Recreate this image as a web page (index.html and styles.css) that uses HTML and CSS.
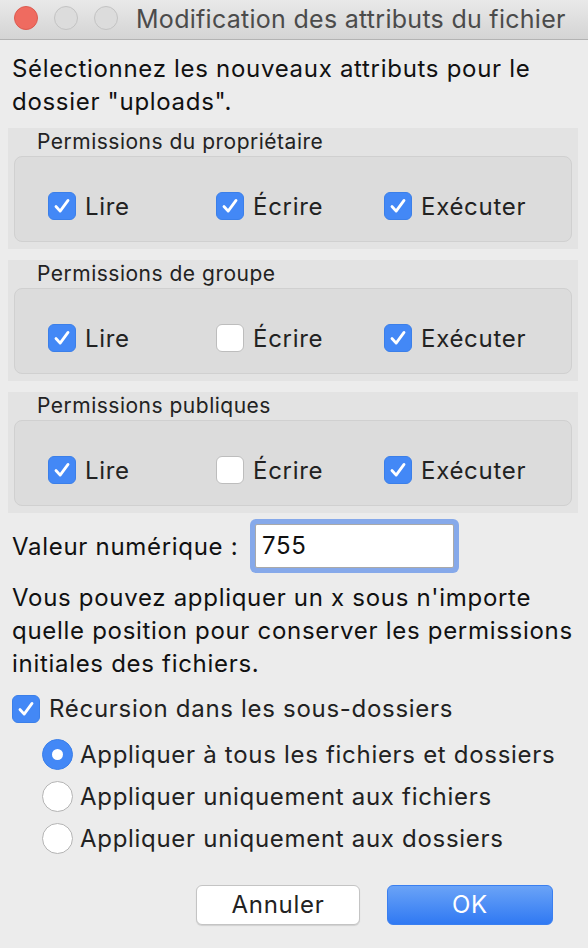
FILE: index.html
```html
<!DOCTYPE html>
<html lang="fr">
<head>
<meta charset="utf-8">
<title>Modification des attributs du fichier</title>
<link rel="stylesheet" href="styles.css">
</head>
<body>
<div class="window">
  <div class="titlebar">
    <div class="lights">
      <span class="light red"></span>
      <span class="light"></span>
      <span class="light"></span>
    </div>
    <span class="title">Modification des attributs du fichier</span>
  </div>
  <div class="content">
    <p class="intro">Sélectionnez les nouveaux attributs pour le<br>dossier "uploads".</p>

    <div class="groups">
      <section class="group">
        <div class="group-title">Permissions du propriétaire</div>
        <div class="group-box">
          <label class="check"><span class="box on"><svg viewBox="0 0 28 28"><path d="M7.5 14.5 L12 19.5 L20.5 8"/></svg></span><span class="lbl">Lire</span></label>
          <label class="check"><span class="box on"><svg viewBox="0 0 28 28"><path d="M7.5 14.5 L12 19.5 L20.5 8"/></svg></span><span class="lbl">Écrire</span></label>
          <label class="check"><span class="box on"><svg viewBox="0 0 28 28"><path d="M7.5 14.5 L12 19.5 L20.5 8"/></svg></span><span class="lbl">Exécuter</span></label>
        </div>
      </section>
      <section class="group">
        <div class="group-title">Permissions de groupe</div>
        <div class="group-box">
          <label class="check"><span class="box on"><svg viewBox="0 0 28 28"><path d="M7.5 14.5 L12 19.5 L20.5 8"/></svg></span><span class="lbl">Lire</span></label>
          <label class="check"><span class="box"></span><span class="lbl">Écrire</span></label>
          <label class="check"><span class="box on"><svg viewBox="0 0 28 28"><path d="M7.5 14.5 L12 19.5 L20.5 8"/></svg></span><span class="lbl">Exécuter</span></label>
        </div>
      </section>
      <section class="group">
        <div class="group-title">Permissions publiques</div>
        <div class="group-box">
          <label class="check"><span class="box on"><svg viewBox="0 0 28 28"><path d="M7.5 14.5 L12 19.5 L20.5 8"/></svg></span><span class="lbl">Lire</span></label>
          <label class="check"><span class="box"></span><span class="lbl">Écrire</span></label>
          <label class="check"><span class="box on"><svg viewBox="0 0 28 28"><path d="M7.5 14.5 L12 19.5 L20.5 8"/></svg></span><span class="lbl">Exécuter</span></label>
        </div>
      </section>
    </div>

    <div class="numeric">
      <span class="numeric-label">Valeur numérique :</span>
      <div class="field">755</div>
    </div>

    <p class="note">Vous pouvez appliquer un x sous n'importe<br>quelle position pour conserver les permissions<br>initiales des fichiers.</p>

    <label class="check recursion"><span class="box on"><svg viewBox="0 0 28 28"><path d="M7.5 14.5 L12 19.5 L20.5 8"/></svg></span><span class="lbl">Récursion dans les sous-dossiers</span></label>

    <div class="radios">
      <div class="radio-row"><span class="radio on"></span><span class="lbl">Appliquer à tous les fichiers et dossiers</span></div>
      <div class="radio-row"><span class="radio"></span><span class="lbl">Appliquer uniquement aux fichiers</span></div>
      <div class="radio-row"><span class="radio"></span><span class="lbl">Appliquer uniquement aux dossiers</span></div>
    </div>

    <div class="buttons">
      <div class="btn cancel">Annuler</div>
      <div class="btn ok">OK</div>
    </div>
  </div>
</div>
</body>
</html>
```

FILE: styles.css
```css
* { box-sizing: border-box; }
html, body {
  margin: 0;
  padding: 0;
  background: #ececec;
}
body {
  font-family: Inter, "Noto Sans", "Liberation Sans", sans-serif;
  color: #1e1e1e;
  width: 588px;
  height: 948px;
  overflow: hidden;
  letter-spacing: 0.7px;
}
.window {
  width: 588px;
  height: 948px;
  background: #ececec;
}
.titlebar {
  height: 40px;
  display: flex;
  align-items: center;
  background: linear-gradient(#e9e9e9, #d4d4d4);
  border-bottom: 1px solid #b3b3b3;
}
.lights {
  display: flex;
  gap: 16px;
  margin-left: 14px;
  margin-top: -3px;
}
.light {
  width: 24px;
  height: 24px;
  border-radius: 50%;
  background: #dcdcdc;
  border: 1px solid #c3c3c3;
}
.light.red {
  background: #ef6b60;
  border-color: #dc5b50;
}
.title {
  margin-left: 18px;
  font-size: 25px;
  letter-spacing: 0.28px;
  color: #4b4b4b;
  white-space: nowrap;
  line-height: 39px;
}
.content {
  padding: 0 10px 0 8px;
}
.intro {
  margin: 12px 0 0 4px;
  font-size: 24px;
  line-height: 33px;
  color: #111;
}
.groups {
  margin-top: 10px;
  display: flex;
  flex-direction: column;
  gap: 11px;
}
.group {
  height: 121px;
  background: #e3e3e3;
  padding: 0 6px 7px 6px;
  display: flex;
  flex-direction: column;
}
.group-title {
  height: 28px;
  line-height: 28px;
  font-size: 21px;
  letter-spacing: 0.5px;
  padding-left: 23px;
  color: #222;
}
.group-box {
  flex: 1;
  background: #dcdcdc;
  border: 1px solid #d0d0d0;
  border-radius: 8px;
  display: flex;
  align-items: flex-start;
  padding: 35px 0 0 33px;
}
.group-box .check {
  width: 168px;
}
.check {
  display: flex;
  align-items: center;
  gap: 9px;
  height: 28px;
}
.box {
  width: 28px;
  height: 28px;
  flex: none;
  border-radius: 6px;
  background: #fff;
  border: 1px solid #bdbdbd;
  display: flex;
  align-items: center;
  justify-content: center;
}
.box.on {
  background: #4388f6;
  border-color: #3b7fe9;
}
.box svg {
  width: 28px;
  height: 28px;
  fill: none;
  stroke: #fff;
  stroke-width: 3;
  stroke-linecap: round;
  stroke-linejoin: round;
}
.lbl {
  font-size: 24px;
  line-height: 33px;
  color: #222;
  white-space: nowrap;
}
.numeric {
  margin-top: 11px;
  display: flex;
  align-items: center;
  height: 44px;
}
.numeric-label {
  width: 247px;
  padding-left: 4px;
  font-size: 24px;
  color: #111;
}
.field {
  width: 199px;
  height: 44px;
  background: #fff;
  border: 1px solid #a9a9a9;
  box-shadow: 0 0 0 5px #86a9ea;
  border-radius: 2px;
  padding-left: 6px;
  font-size: 24px;
  line-height: 42px;
  color: #111;
}
.note {
  margin: 13px 0 0 4px;
  font-size: 24px;
  line-height: 33px;
  color: #111;
}
.recursion {
  margin: 12px 0 0 4px;
  height: 33px;
}
.radios {
  margin: 8px 0 0 34px;
  display: flex;
  flex-direction: column;
}
.radio-row {
  height: 42px;
  display: flex;
  align-items: center;
  gap: 7px;
}
.radio {
  width: 31px;
  height: 31px;
  flex: none;
  border-radius: 50%;
  background: #fff;
  border: 1px solid #b4b4b4;
  display: flex;
  align-items: center;
  justify-content: center;
}
.radio.on {
  background: #4388f6;
  border-color: #3b7fe9;
}
.radio.on::after {
  content: "";
  width: 11px;
  height: 11px;
  border-radius: 50%;
  background: #fff;
}
.buttons {
  margin: 26px 25px 0 0;
  display: flex;
  justify-content: flex-end;
  gap: 27px;
}
.btn {
  height: 40px;
  border-radius: 6px;
  font-size: 24px;
  line-height: 38px;
  text-align: center;
}
.cancel {
  width: 164px;
  background: #fff;
  border: 1px solid #c4c4c4;
  box-shadow: 0 1px 1px rgba(0,0,0,0.12);
  color: #222;
}
.ok {
  width: 166px;
  background: linear-gradient(#6aa3f7, #3079f3);
  border: 1px solid #3a7ff0;
  color: #fff;
}
```
